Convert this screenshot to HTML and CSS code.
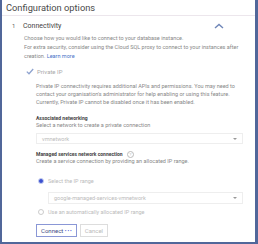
FILE: index.html
```html
<!DOCTYPE html>
<html lang="en">
<head>
  <meta charset="UTF-8">
  <title>Configuration options</title>
  <link rel="stylesheet" href="styles.css">
</head>
<body>
  <div class="frame">
    <div class="title">Configuration options</div>

    <div class="step">
      <div class="step-head">
        <span class="num">1</span>
        <span class="step-name">Connectivity</span>
        <svg class="chevron" width="10" height="6" viewBox="0 0 10 6"><path d="M1 5 L5 1.5 L9 5" fill="none" stroke="#6f86b8" stroke-width="1.4"/></svg>
      </div>

      <div class="step-body">
        <p class="desc">Choose how you would like to connect to your database instance.<br>
          For extra security, consider using the Cloud SQL proxy to connect to your instances after<br>
          creation. <a href="#">Learn more</a></p>

        <div class="check">
          <svg width="8" height="7" viewBox="0 0 8 7"><path d="M0.8 3.6 L3 5.8 L7.2 1" fill="none" stroke="#8fa3cf" stroke-width="1.3"/></svg>
          <span>Private IP</span>
        </div>

        <div class="sub">
          <p class="note">Private IP connectivity requires additional APIs and permissions. You may need to<br>
            contact your organisation's administrator for help enabling or using this feature.<br>
            Currently, Private IP cannot be disabled once it has been enabled.</p>

          <div class="field-title">Associated networking</div>
          <div class="field-hint">Select a network to create a private connection</div>
          <div class="select"><span>vmnetwork</span><span class="arrow"></span></div>

          <div class="field-title managed">Managed services network connection <span class="help">?</span></div>
          <div class="field-hint">Create a service connection by providing an allocated IP range.</div>

          <div class="radio first"><span class="dot on"></span>Select the IP range</div>
          <div class="select indent"><span>google-managed-services-vmnetwork</span><span class="arrow"></span></div>
          <div class="radio"><span class="dot"></span>Use an automatically allocated IP range</div>

          <div class="buttons">
            <button class="btn primary">Connect <span class="dots">&bull;&bull;&bull;</span></button>
            <button class="btn">Cancel</button>
          </div>
        </div>
      </div>
    </div>
  </div>
</body>
</html>
```

FILE: styles.css
```css
html, body {
  margin: 0;
  padding: 0;
}
body {
  font-family: Roboto, "Liberation Sans", Arial, sans-serif;
  color: #777;
  background: #fff;
}
.frame {
  width: 258px;
  height: 244px;
  box-sizing: border-box;
  border-left: 2px solid #51679a;
  border-right: 3px solid #51679a;
  border-bottom: 2px solid #51679a;
  overflow: hidden;
}
.title {
  font-size: 9.3px;
  color: #4a4a4a;
  padding: 2px 0 0 4px;
  height: 13px;
  border-bottom: 1px solid #ece6ec;
}
.step-head {
  display: flex;
  align-items: center;
  height: 15px;
  margin-top: 2px;
  font-size: 7px;
  color: #444;
}
.num {
  width: 10px;
  margin-left: 10px;
  font-size: 6px;
  color: #666;
}
.step-name {
  flex: 1;
  margin-left: 1px;
}
.chevron {
  margin-right: 31px;
}
.step-body {
  padding-left: 22px;
  font-size: 5.5px;
}
.desc {
  margin: 1px 0 0;
  line-height: 9px;
  color: #888;
}
.desc a {
  color: #4a73c8;
  text-decoration: none;
}
.check {
  display: flex;
  align-items: center;
  gap: 3px;
  margin: 7px 0 0 2px;
  color: #aaa;
  font-size: 6px;
}
.sub {
  padding-left: 12px;
}
.note {
  margin: 7px 0 0;
  line-height: 8px;
  color: #888;
}
.field-title {
  margin-top: 9px;
  font-weight: bold;
  font-size: 5px;
  color: #444;
  line-height: 7px;
}
.field-title.managed {
  margin-top: 7px;
}
.help {
  display: inline-block;
  width: 5px;
  height: 5px;
  border: 0.6px solid #bbb;
  border-radius: 50%;
  font-size: 4px;
  line-height: 5px;
  text-align: center;
  color: #bbb;
  font-weight: normal;
  margin-left: 3px;
  vertical-align: middle;
}
.field-hint {
  line-height: 7px;
  color: #888;
}
.select {
  display: flex;
  align-items: center;
  justify-content: space-between;
  width: 207px;
  height: 11px;
  margin-top: 4px;
  padding: 0 5px;
  box-sizing: border-box;
  border: 1px solid #eee;
  color: #bbb;
}
.select.indent {
  height: 12px;
  margin-top: 8px;
  margin-left: 12px;
  width: 195px;
}
.arrow {
  width: 0;
  height: 0;
  border-left: 2px solid transparent;
  border-right: 2px solid transparent;
  border-top: 2px solid #999;
}
.radio {
  display: flex;
  align-items: center;
  gap: 4px;
  height: 7px;
  margin-top: 4px;
  margin-left: 2px;
  color: #bbb;
}
.radio.first {
  margin-top: 12px;
}
.dot {
  width: 4px;
  height: 4px;
  border-radius: 50%;
  border: 1px solid #ccc;
}
.dot.on {
  border-color: #c6cff0;
  background: #3b4fd0;
}
.buttons {
  display: flex;
  gap: 3px;
  margin-top: 9px;
}
.btn {
  font-family: inherit;
  font-size: 6px;
  height: 13px;
  padding: 0 4px;
  background: #fff;
  border: 1px solid #ddd;
  color: #bbb;
}
.btn.primary {
  border-color: #8a97d6;
  color: #3e4c86;
  padding: 0 3px 0 4px;
}
.dots {
  color: #3b4fd0;
  letter-spacing: 1px;
  font-size: 5px;
}
```
